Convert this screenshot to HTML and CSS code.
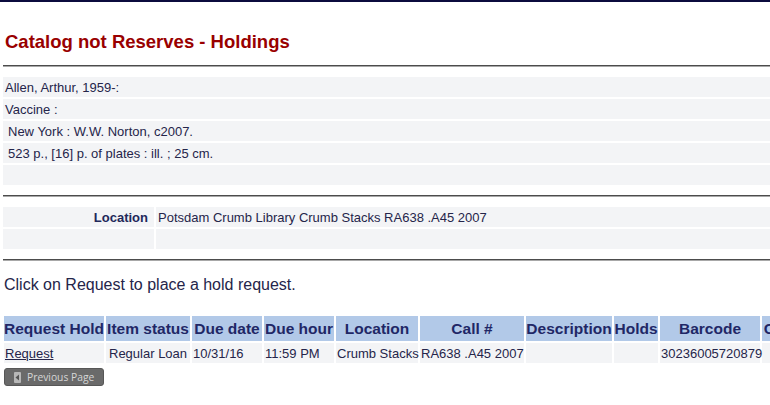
FILE: index.html
```html
<!DOCTYPE html>
<html lang="en">

<head>
    <meta charset="UTF-8">
    <meta name="viewport" content="width=device-width, initial-scale=1.0">
    <title>Catalog not Reserves - Holdings</title>
    <link rel="stylesheet" href="styles.css">
</head>

<body>
    <div class="topbar"></div>
    <div class="page">
        <h2 class="title">Catalog not Reserves - Holdings</h2>
        <hr class="rule">

        <table class="bib">
            <tr><td>Allen, Arthur, 1959-:</td></tr>
            <tr><td>Vaccine :</td></tr>
            <tr><td class="indent">New York : W.W. Norton, c2007.</td></tr>
            <tr><td class="indent">523 p., [16] p. of plates : ill. ; 25 cm.</td></tr>
            <tr><td></td></tr>
        </table>
        <hr class="rule">

        <table class="loc">
            <tr>
                <th>Location</th>
                <td>Potsdam Crumb Library Crumb Stacks RA638 .A45 2007</td>
            </tr>
            <tr>
                <th></th>
                <td></td>
            </tr>
        </table>
        <hr class="rule">

        <p class="hint">Click on Request to place a hold request.</p>

        <table class="holdings">
            <colgroup>
                <col class="c-req">
                <col class="c-status">
                <col class="c-date">
                <col class="c-hour">
                <col class="c-loc">
                <col class="c-call">
                <col class="c-desc">
                <col class="c-holds">
                <col class="c-bar">
                <col class="c-copy">
            </colgroup>
            <thead>
                <tr>
                    <th>Request Hold</th>
                    <th>Item status</th>
                    <th>Due date</th>
                    <th>Due hour</th>
                    <th>Location</th>
                    <th>Call #</th>
                    <th>Description</th>
                    <th>Holds</th>
                    <th>Barcode</th>
                    <th>Copy</th>
                </tr>
            </thead>
            <tbody>
                <tr>
                    <td><a href="#">Request</a></td>
                    <td class="pad">Regular Loan</td>
                    <td>10/31/16</td>
                    <td>11:59 PM</td>
                    <td>Crumb Stacks</td>
                    <td>RA638 .A45 2007</td>
                    <td></td>
                    <td></td>
                    <td>30236005720879</td>
                    <td></td>
                </tr>
            </tbody>
        </table>

        <a href="#" class="prev-btn">
            <svg width="7" height="11" viewBox="0 0 7 11">
                <rect x="0" y="0" width="7" height="11" rx="1" fill="#b8b8b8" />
                <polygon points="5,2.5 5,8.5 1.5,5.5" fill="#555" />
            </svg>
            Previous Page
        </a>
    </div>
</body>

</html>
```

FILE: styles.css
```css
html {
    overflow: hidden;
}

body {
    margin: 0;
    padding: 0;
    background: #fff;
    font-family: "Liberation Sans", Arial, sans-serif;
    color: #25254a;
}

.topbar {
    height: 2px;
    background: #0b0b3d;
}

.page {
    width: 900px;
    padding-left: 1px;
}

.title {
    margin: 29px 0 0 4px;
    font-size: 18.5px;
    line-height: 22px;
    font-weight: bold;
    color: #990000;
}

.rule {
    margin: 12px 0 8px 2px;
    height: 0;
    border: none;
    border-top: 1px solid #4c4c4c;
    border-bottom: 1px solid #a8a8a8;
}

/* bibliographic lines */
.bib {
    width: 100%;
    border-spacing: 2px;
}

.bib td {
    height: 20px;
    padding: 0 2px;
    background: #f3f4f6;
    font-size: 13px;
    vertical-align: middle;
}

.bib td.indent {
    padding-left: 5px;
}

.bib + .rule,
.loc + .rule {
    margin-top: 8px;
}

/* location block */
.loc {
    width: 100%;
    border-spacing: 2px;
}

.loc th,
.loc td {
    height: 20px;
    padding: 0;
    background: #f3f4f6;
    font-size: 13px;
    vertical-align: middle;
}

.loc th {
    width: 145px;
    padding-right: 6px;
    text-align: right;
    font-weight: bold;
    color: #22285a;
}

.loc td {
    padding-left: 2px;
}

.hint {
    margin: 15px 0 20px 3px;
    font-size: 16px;
    line-height: 18px;
}

/* holdings table */
.holdings {
    table-layout: fixed;
    width: 804px;
    margin-left: 1px;
    border-spacing: 2px;
}

.c-req { width: 100px; }
.c-status { width: 84px; }
.c-date { width: 70px; }
.c-hour { width: 70px; }
.c-loc { width: 82px; }
.c-call { width: 104px; }
.c-desc { width: 86px; }
.c-holds { width: 44px; }
.c-bar { width: 100px; }
.c-copy { width: 42px; }

.holdings th {
    height: 25px;
    padding: 0;
    background: #b2c9e8;
    color: #1f2766;
    font-size: 15.5px;
    font-weight: bold;
    text-align: center;
    white-space: nowrap;
}

.holdings td {
    height: 20px;
    padding: 0 1px;
    background: #f3f4f6;
    font-size: 13px;
    white-space: nowrap;
}

.holdings td.pad {
    padding-left: 3px;
}

.holdings a {
    color: #25254a;
    text-decoration: underline;
}

.prev-btn {
    display: inline-flex;
    align-items: center;
    gap: 6px;
    box-sizing: border-box;
    width: 100px;
    height: 18px;
    margin: 3px 0 0 3px;
    padding-left: 9px;
    background: #6a6a6a;
    border: 1px solid #575757;
    border-radius: 3px;
    color: #d6d6d6;
    font-family: "Open Sans", "DejaVu Sans", sans-serif;
    font-size: 10.3px;
    text-decoration: none;
}
```
